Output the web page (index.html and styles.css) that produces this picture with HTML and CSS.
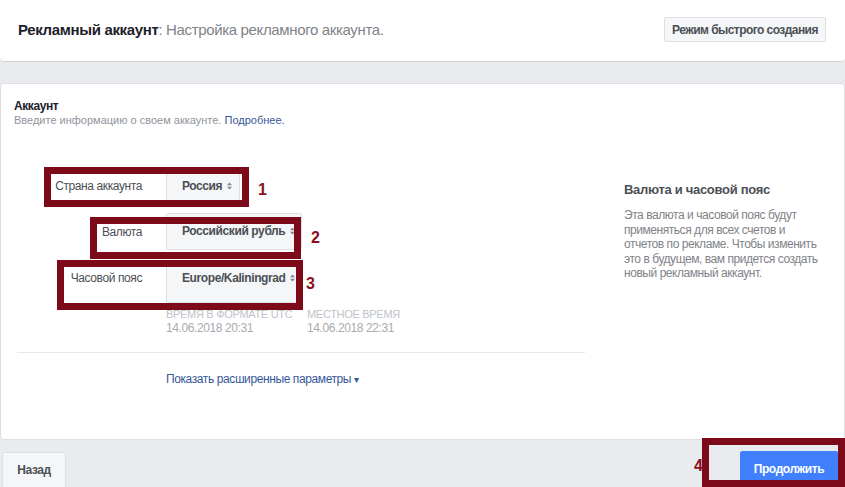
FILE: index.html
```html
<!DOCTYPE html>
<html lang="ru">
<head>
<meta charset="utf-8">
<title>Рекламный аккаунт</title>
<link rel="stylesheet" href="styles.css">
</head>
<body>
<div class="page">
  <header class="topbar">
    <h1 class="title"><b>Рекламный аккаунт</b>: Настройка рекламного аккаунта.</h1>
    <button class="btn btn-quick">Режим быстрого создания</button>
  </header>

  <section class="card">
    <div class="card-head">
      <div class="card-title">Аккаунт</div>
      <div class="card-sub">Введите информацию о своем аккаунте. <a class="link">Подробнее.</a></div>
    </div>
    <div class="card-body">
      <div class="form">
        <div class="rows">
          <div class="row r1">
            <span class="label">Страна аккаунта</span>
            <span class="select s1">Россия <svg class="caret" width="5" height="8" viewBox="0 0 5 8"><path d="M0 3.2L2.5 0.5L5 3.2Z M0 4.8L2.5 7.5L5 4.8Z" fill="#7f8389"/></svg></span>
          </div>
          <div class="row r2">
            <span class="label">Валюта</span>
            <span class="select s2">Российский рубль <svg class="caret" width="5" height="8" viewBox="0 0 5 8"><path d="M0 3.2L2.5 0.5L5 3.2Z M0 4.8L2.5 7.5L5 4.8Z" fill="#7f8389"/></svg></span>
          </div>
          <div class="row r3">
            <span class="label">Часовой пояс</span>
            <span class="select s3">Europe/Kaliningrad <svg class="caret" width="5" height="8" viewBox="0 0 5 8"><path d="M0 3.2L2.5 0.5L5 3.2Z M0 4.8L2.5 7.5L5 4.8Z" fill="#7f8389"/></svg></span>
          </div>
        </div>
        <div class="times">
          <div class="time">
            <div class="time-label">Время в формате UTC</div>
            <div class="time-val">14.06.2018 20:31</div>
          </div>
          <div class="time">
            <div class="time-label">Местное время</div>
            <div class="time-val">14.06.2018 22:31</div>
          </div>
        </div>
        <div class="divider"></div>
        <div class="more">Показать расширенные параметры <span class="tri">&#9662;</span></div>
      </div>
      <aside class="info">
        <div class="info-title">Валюта и часовой пояс</div>
        <p class="info-text">Эта валюта и часовой пояс будут применяться для всех счетов и отчетов по рекламе. Чтобы изменить это в будущем, вам придется создать новый рекламный аккаунт.</p>
      </aside>
    </div>
  </section>

  <footer class="footer">
    <button class="btn btn-back">Назад</button>
    <button class="btn btn-primary">Продолжить</button>
  </footer>

  <div class="mark m1"></div>
  <div class="mark m2"></div>
  <div class="mark m3"></div>
  <div class="mark m4"></div>
  <span class="num n1">1</span>
  <span class="num n2">2</span>
  <span class="num n3">3</span>
  <span class="num n4">4</span>
</div>
</body>
</html>
```
FILE: styles.css
```css
* { box-sizing: border-box; }
html, body { margin: 0; padding: 0; }
body {
  background: #e9ebee;
  font-family: "Liberation Sans", Arial, sans-serif;
  color: #4b4f56;
  width: 845px;
  height: 487px;
  overflow: hidden;
  letter-spacing: -0.4px;
}
.page { position: relative; height: 487px; }

.topbar {
  height: 62px;
  background: #fff;
  border-bottom: 1px solid #cfd1d5;
  border-radius: 0 0 4px 4px;
  display: flex;
  align-items: center;
  justify-content: space-between;
  padding: 0 19px 2px 18px;
}
.title {
  margin: 0;
  font-size: 15px;
  font-weight: normal;
  color: #7f8389;
  letter-spacing: -0.35px;
}
.title b { color: #1d2129; font-weight: bold; }

.btn {
  font-family: "Liberation Sans", Arial, sans-serif;
  font-size: 12px;
  font-weight: bold;
  color: #4b4f56;
  letter-spacing: -0.4px;
  background: #f5f6f7;
  border: 1px solid #dddfe2;
  border-radius: 2px;
  height: 25px;
  padding: 0 11px;
}
.btn-quick { width: 162px; padding: 0; letter-spacing: -0.55px; }

.card {
  margin-top: 21px;
  height: 357px;
  background: #fff;
  border: 1px solid #dddfe2;
  border-radius: 4px;
  padding: 15px 13px 0 13px;
}
.card-title { font-size: 12px; font-weight: bold; color: #1d2129; line-height: 14px; }
.card-sub { font-size: 11px; color: #90949c; line-height: 15px; letter-spacing: 0; }
.link { color: #365899; }

.card-body { display: flex; margin-top: 43px; }
.form { width: 572px; margin-left: 3px; }
.rows { display: flex; flex-direction: column; }
.row { display: flex; align-items: center; }
.r1 { height: 30px; }
.r2 { height: 37px; margin-top: 12px; }
.r3 { height: 38px; margin-top: 15px; align-items: flex-start; }
.r3 .label { padding-top: 6px; }
.label {
  width: 125px;
  text-align: right;
  font-size: 12px;
  color: #4b4f56;
}
.select {
  margin-left: 24px;
  height: 100%;
  background: #f5f6f7;
  border: 1px solid #dddfe2;
  border-radius: 2px;
  font-size: 12px;
  font-weight: bold;
  color: #4b4f56;
  display: flex;
  align-items: center;
  padding: 0 0 0 15px;
  white-space: nowrap;
  overflow: hidden;
}
.s1 { width: 74px; }
.s2 { width: 136px; align-items: flex-start; padding-top: 10px; }
.s3 { width: 136px; align-items: flex-start; padding-top: 5px; }
.s2 .caret { margin-top: 3px; }
.s3 .caret { margin-top: 3px; }
.caret { margin-left: 5px; flex: none; }

.times { display: flex; margin-left: 149px; margin-top: 4px; }
.time { width: 141px; white-space: nowrap; }
.time-label { font-size: 11px; letter-spacing: -0.3px; color: #bec2c9; text-transform: uppercase; line-height: 14px; }
.time-val { font-size: 12px; color: #a7abb2; line-height: 14px; }

.divider { border-top: 1px solid #e5e6e9; margin-top: 17px; width: 568px; }
.more {
  margin-top: 19px;
  margin-left: 149px;
  font-size: 12px;
  color: #365899;
}
.tri { font-size: 10px; }

.info { margin-left: 35px; width: 200px; padding-top: 11px; }
.info-title { font-size: 13px; font-weight: bold; color: #4b4f56; letter-spacing: -0.3px; }
.info-text { margin: 11px 0 0; font-size: 12px; line-height: 14.5px; color: #7f8389; letter-spacing: -0.45px; }

.footer {
  display: flex;
  justify-content: space-between;
  padding: 12px 7px 0 2px;
}
.btn-back { height: 36px; width: 64px; padding: 0; }
.btn-primary {
  height: 36px;
  width: 98px;
  padding: 0;
  margin-top: -1px;
  background: #4080ff;
  border-color: #4080ff;
  color: #fff;
}

.mark {
  position: absolute;
  border: 7px solid #7d0a18;
}
.m1 { left: 44px; top: 167px; width: 205px; height: 40px; }
.m2 { left: 90px; top: 217px; width: 211px; height: 42px; }
.m3 { left: 57px; top: 260px; width: 246px; height: 50px; }
.m4 { left: 702px; top: 438px; width: 143px; height: 49px; }
.num {
  position: absolute;
  font-size: 16px;
  font-weight: bold;
  color: #8b0f1e;
  line-height: 16px;
  letter-spacing: 0;
}
.n1 { left: 258px; top: 182px; }
.n2 { left: 311px; top: 230px; }
.n3 { left: 306px; top: 276px; }
.n4 { left: 694px; top: 458px; }
```
